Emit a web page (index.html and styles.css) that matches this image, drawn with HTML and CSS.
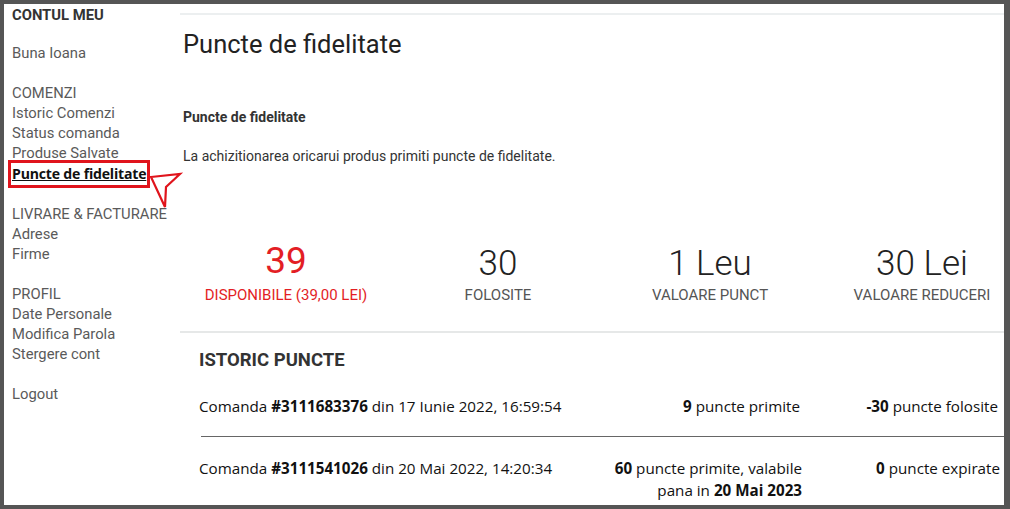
FILE: index.html
```html
<!DOCTYPE html>
<html lang="ro">
<head>
  <meta charset="UTF-8" />
  <meta name="viewport" content="width=device-width, initial-scale=1.0" />
  <title>Puncte de fidelitate</title>
  <link rel="stylesheet" href="styles.css">
</head>
<body>
  <div class="frame">
    <aside class="sidebar">
      <div class="side-title">CONTUL MEU</div>
      <div class="side-group">
        <a class="side-link">Buna Ioana</a>
      </div>
      <div class="side-group">
        <div class="side-head">COMENZI</div>
        <a class="side-link">Istoric Comenzi</a>
        <a class="side-link">Status comanda</a>
        <a class="side-link">Produse Salvate</a>
        <a class="side-link active">Puncte de fidelitate</a>
      </div>
      <div class="side-group">
        <div class="side-head">LIVRARE &amp; FACTURARE</div>
        <a class="side-link">Adrese</a>
        <a class="side-link">Firme</a>
      </div>
      <div class="side-group">
        <div class="side-head">PROFIL</div>
        <a class="side-link">Date Personale</a>
        <a class="side-link">Modifica Parola</a>
        <a class="side-link">Stergere cont</a>
      </div>
      <div class="side-group">
        <a class="side-link">Logout</a>
      </div>
    </aside>

    <main class="content">
      <h1 class="page-title">Puncte de fidelitate</h1>
      <h3 class="intro-title">Puncte de fidelitate</h3>
      <p class="intro-text">La achizitionarea oricarui produs primiti puncte de fidelitate.</p>

      <div class="stats">
        <div class="stat available">
          <div class="stat-num">39</div>
          <div class="stat-label">DISPONIBILE (39,00 LEI)</div>
        </div>
        <div class="stat">
          <div class="stat-num">30</div>
          <div class="stat-label">FOLOSITE</div>
        </div>
        <div class="stat">
          <div class="stat-num">1 Leu</div>
          <div class="stat-label">VALOARE PUNCT</div>
        </div>
        <div class="stat">
          <div class="stat-num">30 Lei</div>
          <div class="stat-label">VALOARE REDUCERI</div>
        </div>
      </div>

      <section class="history">
        <h2 class="history-title">ISTORIC PUNCTE</h2>
        <div class="history-row">
          <div>Comanda <b>#3111683376</b> din 17 Iunie 2022, 16:59:54</div>
          <div class="col-right"><b>9</b> puncte primite</div>
          <div class="col-right"><b>-30</b> puncte folosite</div>
        </div>
        <div class="history-row">
          <div>Comanda <b>#3111541026</b> din 20 Mai 2022, 14:20:34</div>
          <div class="col-right"><b>60</b> puncte primite, valabile<br>pana in <b>20 Mai 2023</b></div>
          <div class="col-right"><b>0</b> puncte expirate</div>
        </div>
      </section>
    </main>

    <!-- annotation arrow -->
    <svg class="pointer" width="40" height="42" viewBox="0 0 40 42">
      <path d="M6 7 L35 4 L21 17 L20 37 Z" fill="#fff" stroke="#e0141c" stroke-width="2.2" stroke-linejoin="miter"/>
    </svg>
  </div>
</body>
</html>
```

FILE: styles.css
```css
html, body {
  margin: 0;
  height: 509px;
}
body {
  background: #555;
  padding: 4px 6px 4px 4px;
  box-sizing: border-box;
  font-family: Roboto, "Liberation Sans", sans-serif;
}
.frame {
  position: relative;
  background: #fff;
  height: 501px;
  overflow: hidden;
  display: grid;
  grid-template-columns: 176px 860px;
}

/* Sidebar */
.sidebar {
  padding: 1px 0 0 8px;
  font-size: 14.8px;
  line-height: 20px;
  color: #5a5a5a;
}
.side-title {
  font-weight: bold;
  color: #333;
  margin-bottom: 18px;
}
.side-group {
  display: flex;
  flex-direction: column;
  align-items: flex-start;
  margin-bottom: 20px;
}
.side-head { white-space: nowrap; }
.side-link {
  color: #5a5a5a;
  text-decoration: none;
  white-space: nowrap;
}
.side-link.active {
  font-family: "Open Sans", "Liberation Sans", sans-serif;
  font-weight: bold;
  font-size: 14.1px;
  color: #111;
  text-decoration: underline;
  outline: 3px solid #e0141c;
  outline-offset: 1px;
  margin-top: 1px;
  letter-spacing: -0.2px;
}

/* Main */
.content {
  margin-top: 9px;
  border-top: 2px solid #eceff0;
  color: #333;
}
.page-title {
  margin: 14px 0 0 3px;
  font-size: 25.5px;
  line-height: 30px;
  font-weight: 400;
  color: #222;
}
.intro-title {
  margin: 49px 0 0 3px;
  font-size: 14px;
  line-height: 18px;
  font-weight: bold;
}
.intro-text {
  margin: 21px 0 0 3px;
  font-size: 14px;
  line-height: 18px;
}

.stats {
  display: grid;
  grid-template-columns: repeat(4, 212px);
  margin-top: 78px;
  padding-bottom: 26px;
  border-bottom: 2px solid #e6e8e8;
}
.stat {
  text-align: center;
  color: #555;
}
.stat-num {
  font-size: 35px;
  line-height: 42px;
  font-weight: 300;
  color: #222;
}
.stat-label {
  font-size: 15px;
  line-height: 20px;
}
.available .stat-num {
  font-size: 37px;
  font-weight: 400;
  color: #e31e25;
  margin-top: -3px;
  margin-bottom: 3px;
}
.available .stat-label { color: #e31e25; }

.history {
  padding-left: 19px;
}
.history-title {
  margin: 15px 0 0;
  font-size: 18.5px;
  line-height: 24px;
  font-weight: bold;
  color: #333;
}
.history-row {
  display: grid;
  grid-template-columns: 400px 201px 198px;
  font-family: "Open Sans", "Liberation Sans", sans-serif;
  font-size: 15.2px;
  line-height: 22px;
  color: #111;
  padding: 23px 0 19px;
}
.history-row + .history-row {
  border-top: 1px solid #666;
  margin-left: 2px;
  padding-top: 20px;
}
.history-row + .history-row > div:first-child { margin-left: -2px; }
.col-right { text-align: right; }

/* annotation */
.pointer {
  position: absolute;
  left: 141px;
  top: 166px;
}
```
